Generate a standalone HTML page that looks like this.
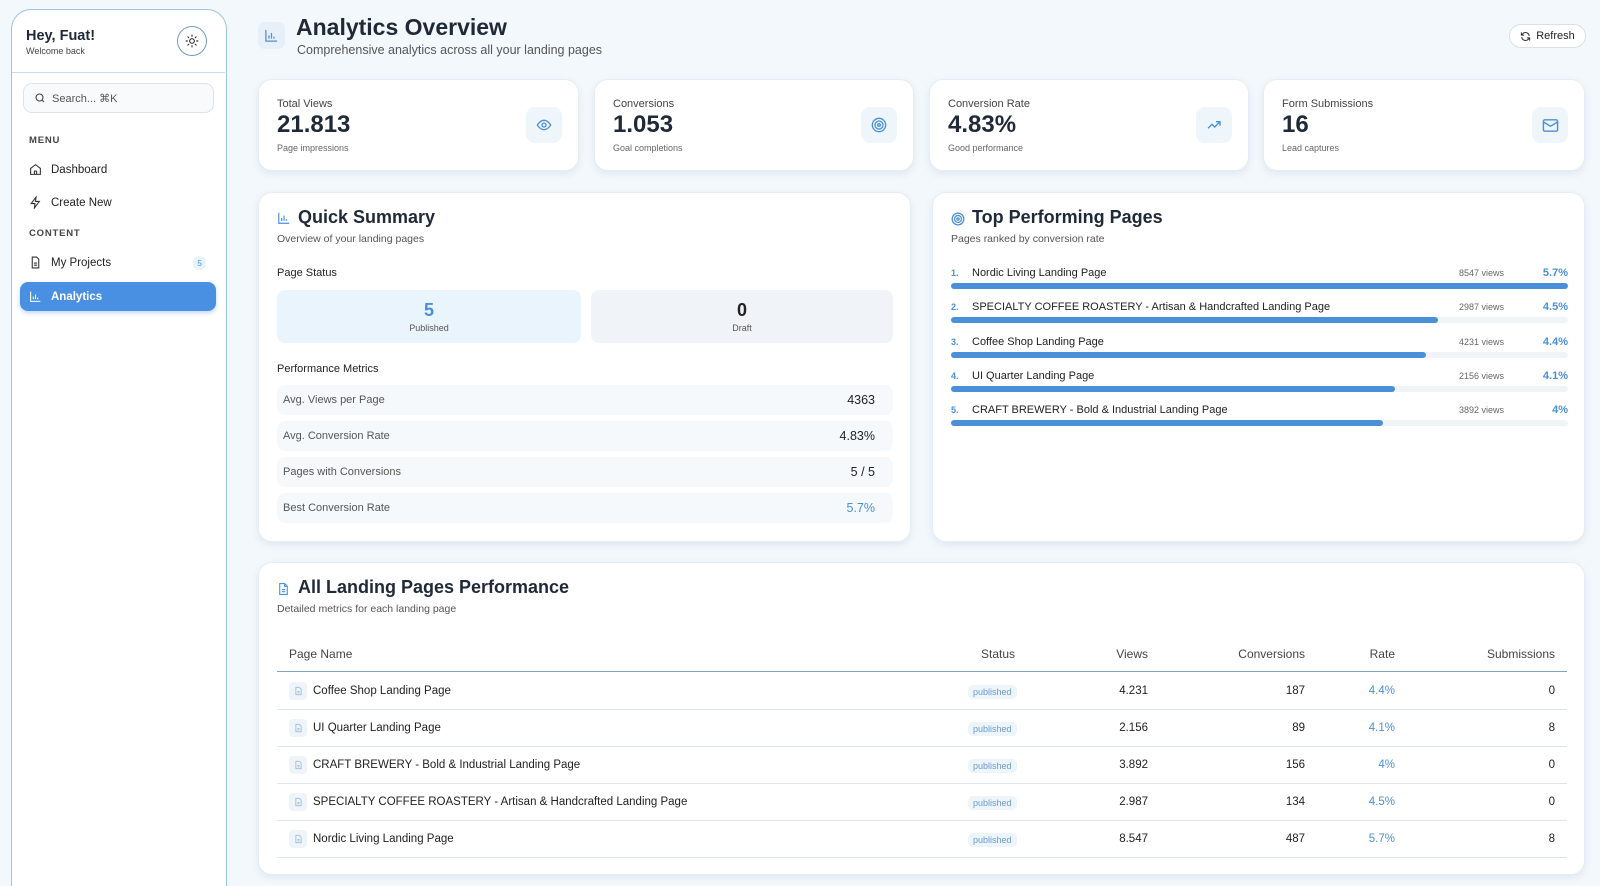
<!DOCTYPE html>
<html><head><meta charset="utf-8"><style>
*{box-sizing:border-box;margin:0;padding:0}
html,body{width:1600px;height:886px;overflow:hidden}
body{background:#f3f8fc;font-family:"Liberation Sans",Arial,sans-serif;color:#1f2937;position:relative}
.a{position:absolute}
.card{position:absolute;background:#fff;border:1px solid #e6edf4;border-radius:14px;box-shadow:0 3px 8px rgba(60,90,130,.10)}
.sb{left:11px;top:9px;width:216px;height:877px;background:#fff;border:1.5px solid #9fc3e4;border-bottom:none;border-radius:20px 20px 0 0}
.nav{position:absolute;left:20px;width:196px;height:29px;border-radius:8px;font-size:11.5px;display:flex;align-items:center;padding-left:9px;gap:9px;color:#222}
.sec{position:absolute;left:29px;font-size:9.5px;letter-spacing:.8px;color:#444;font-weight:bold}
.lbl{font-size:11px;color:#444}
.val{font-size:24px;font-weight:bold;color:#1f2937}
.sub{font-size:9px;color:#666}
.ib{position:absolute;width:36px;height:36px;border-radius:9px;background:#eef5fb;display:flex;align-items:center;justify-content:center}
.mrow{position:absolute;left:18px;width:616px;height:30px;border-radius:8px;background:#f6f9fc;font-size:11px;color:#555;display:flex;align-items:center;justify-content:space-between;padding:0 18px 0 6px}
.mrow b{font-weight:normal;font-size:12.5px;color:#222}
.ti{position:absolute;left:18px;width:617px;font-size:11px}
.ti .n{position:absolute;left:0;top:0;color:#4a90d9;font-size:9px;font-weight:bold}
.ti .t{position:absolute;left:21px;top:-1px;color:#222}
.ti .v{position:absolute;right:64px;top:0;color:#666;font-size:9px}
.ti .p{position:absolute;right:0;top:-1px;color:#4a90d9;font-weight:bold;font-size:11px}
.ti .bar{position:absolute;left:0;top:15px;width:617px;height:6px;background:#f1f4f7;border-radius:3px}
.ti .bar i{display:block;height:6px;background:#4a90d9;border-radius:3px}
.tr{position:absolute;left:18px;width:1290px;height:37px;border-bottom:1px solid #dce6ef;font-size:11.5px;color:#222}
.tr span{position:absolute;top:12px}
.pi{position:absolute;left:12px;top:9px;width:18px;height:18px;border-radius:4px;background:#eef4fa;display:flex;align-items:center;justify-content:center}
.bd{position:absolute;top:12px;left:691px;font-size:9px;color:#6a9ccc;background:#edf4fa;border-radius:5px;padding:2px 5px}
.r{text-align:right}
</style></head><body>

<div class="a sb">
  <div class="a" style="left:14px;top:18px;font-size:14.5px;font-weight:bold">Hey, Fuat!</div>
  <div class="a" style="left:14px;top:36px;font-size:9px;color:#444">Welcome back</div>
  <div class="a" style="left:165px;top:16px;width:30px;height:30px;border-radius:50%;border:1.5px solid #6f9cc4;display:flex;align-items:center;justify-content:center">
    <svg width="14" height="14" viewBox="0 0 24 24" fill="none" stroke="#333" stroke-width="2" stroke-linecap="round"><circle cx="12" cy="12" r="4"/><path d="M12 2v2M12 20v2M4.9 4.9l1.4 1.4M17.7 17.7l1.4 1.4M2 12h2M20 12h2M4.9 19.1l1.4-1.4M17.7 6.3l1.4-1.4"/></svg>
  </div>
  <div class="a" style="left:0;top:62px;width:213px;height:1px;background:#c9dcee"></div>
  <div class="a" style="left:11px;top:73px;width:191px;height:30px;border:1px solid #dde3ea;border-radius:9px;background:#f9fafb;font-size:11px;color:#555;display:flex;align-items:center;padding-left:10px;gap:6px">
    <svg width="12" height="12" viewBox="0 0 24 24" fill="none" stroke="#444" stroke-width="2.2"><circle cx="11" cy="11" r="7"/><path d="M20 20l-4-4"/></svg>Search... ⌘K
  </div>
</div>
<div class="sec" style="top:135px">MENU</div>
<div class="nav" style="top:155px"><svg width="13" height="13" viewBox="0 0 24 24" fill="none" stroke="#333" stroke-width="2"><path d="M3 10l9-7 9 7v11H3z"/><path d="M10 21v-6h4v6"/></svg>Dashboard</div>
<div class="nav" style="top:188px"><svg width="13" height="13" viewBox="0 0 24 24" fill="none" stroke="#333" stroke-width="2"><path d="M13 2L4 14h7l-1 8 9-12h-7z"/></svg>Create New</div>
<div class="sec" style="top:228px">CONTENT</div>
<div class="nav" style="top:248px"><svg width="13" height="13" viewBox="0 0 24 24" fill="none" stroke="#333" stroke-width="2"><path d="M14 2H6v20h12V6z"/><path d="M9 13h6M9 17h6"/></svg>My Projects<span style="position:absolute;right:10px;font-size:8.5px;color:#4a90d9;background:#eaf3fb;border-radius:6px;padding:2px 4px">5</span></div>
<div class="nav" style="top:282px;background:#4a90e2;color:#fff;font-weight:bold;box-shadow:0 2px 5px rgba(74,144,226,.35)"><svg width="13" height="13" viewBox="0 0 24 24" fill="none" stroke="#fff" stroke-width="2"><path d="M3 3v18h18M8 17v-5M12 17V8M16 17v-3"/></svg>Analytics</div>

<div class="ib" style="left:258px;top:22px;width:27px;height:27px;border-radius:7px;background:#e7f0f8"><svg width="15" height="15" viewBox="0 0 24 24" fill="none" stroke="#4a90d9" stroke-width="2"><path d="M3 3v18h18M8 17v-5M12 17V8M16 17v-3"/></svg></div>
<div class="a" style="left:296px;top:14px;font-size:23px;font-weight:bold;color:#1f2937">Analytics Overview</div>
<div class="a" style="left:297px;top:43px;font-size:12.5px;color:#555">Comprehensive analytics across all your landing pages</div>
<div class="a" style="left:1509px;top:24px;width:77px;height:24px;border:1px solid #d9e1e8;border-radius:12px;background:#fff;font-size:11px;color:#222;display:flex;align-items:center;justify-content:center;gap:5px"><svg width="11" height="11" viewBox="0 0 24 24" fill="none" stroke="#333" stroke-width="2.2"><path d="M20 11a8 8 0 0 0-14-5L3 9M3 3v6h6M4 13a8 8 0 0 0 14 5l3-3M21 21v-6h-6"/></svg>Refresh</div>

<div class="card" style="left:258px;top:79px;width:321px;height:92px">
 <div class="a lbl" style="left:18px;top:18px">Total Views</div><div class="a val" style="left:18px;top:31px">21.813</div><div class="a sub" style="left:18px;top:63px">Page impressions</div>
 <div class="ib" style="left:267px;top:27px"><svg width="16" height="16" viewBox="0 0 24 24" fill="none" stroke="#4a90d9" stroke-width="2"><path d="M2 12s4-7 10-7 10 7 10 7-4 7-10 7S2 12 2 12z"/><circle cx="12" cy="12" r="3"/></svg></div>
</div>
<div class="card" style="left:594px;top:79px;width:320px;height:92px">
 <div class="a lbl" style="left:18px;top:18px">Conversions</div><div class="a val" style="left:18px;top:31px">1.053</div><div class="a sub" style="left:18px;top:63px">Goal completions</div>
 <div class="ib" style="left:266px;top:27px"><svg width="16" height="16" viewBox="0 0 24 24" fill="none" stroke="#4a90d9" stroke-width="2"><circle cx="12" cy="12" r="10"/><circle cx="12" cy="12" r="6"/><circle cx="12" cy="12" r="2"/></svg></div>
</div>
<div class="card" style="left:929px;top:79px;width:320px;height:92px">
 <div class="a lbl" style="left:18px;top:18px">Conversion Rate</div><div class="a val" style="left:18px;top:31px">4.83%</div><div class="a sub" style="left:18px;top:63px">Good performance</div>
 <div class="ib" style="left:266px;top:27px"><svg width="16" height="16" viewBox="0 0 24 24" fill="none" stroke="#4a90d9" stroke-width="2"><path d="M3 17l6-6 4 4 8-8M15 7h6v6"/></svg></div>
</div>
<div class="card" style="left:1263px;top:79px;width:322px;height:92px">
 <div class="a lbl" style="left:18px;top:18px">Form Submissions</div><div class="a val" style="left:18px;top:31px">16</div><div class="a sub" style="left:18px;top:63px">Lead captures</div>
 <div class="ib" style="left:268px;top:27px"><svg width="17" height="17" viewBox="0 0 24 24" fill="none" stroke="#4a90d9" stroke-width="2"><rect x="2" y="4" width="20" height="16" rx="2"/><path d="M2 7l10 6 10-6"/></svg></div>
</div>

<div class="card" style="left:258px;top:192px;width:653px;height:350px">
 <svg class="a" style="left:18px;top:18px" width="14" height="14" viewBox="0 0 24 24" fill="none" stroke="#4a90d9" stroke-width="2"><path d="M3 3v18h18M8 17v-5M12 17V8M16 17v-3"/></svg>
 <div class="a" style="left:39px;top:14px;font-size:18px;font-weight:bold">Quick Summary</div>
 <div class="a" style="left:18px;top:40px;font-size:10.5px;color:#555">Overview of your landing pages</div>
 <div class="a" style="left:18px;top:74px;font-size:11px;color:#222">Page Status</div>
 <div class="a" style="left:18px;top:97px;width:304px;height:53px;border-radius:8px;background:#eaf4fd;text-align:center"><div style="font-size:18px;font-weight:bold;color:#4a90d9;margin-top:10px">5</div><div style="font-size:9px;color:#555;margin-top:2px">Published</div></div>
 <div class="a" style="left:332px;top:97px;width:302px;height:53px;border-radius:8px;background:#f0f4f8;text-align:center"><div style="font-size:18px;font-weight:bold;color:#222;margin-top:10px">0</div><div style="font-size:9px;color:#555;margin-top:2px">Draft</div></div>
 <div class="a" style="left:18px;top:170px;font-size:11px;color:#222">Performance Metrics</div>
 <div class="mrow" style="top:192px">Avg. Views per Page<b>4363</b></div>
 <div class="mrow" style="top:228px">Avg. Conversion Rate<b>4.83%</b></div>
 <div class="mrow" style="top:264px">Pages with Conversions<b>5 / 5</b></div>
 <div class="mrow" style="top:300px">Best Conversion Rate<b style="color:#4a90d9">5.7%</b></div>
</div>

<div class="card" style="left:932px;top:192px;width:653px;height:350px">
 <svg class="a" style="left:18px;top:19px" width="14" height="14" viewBox="0 0 24 24" fill="none" stroke="#4a90d9" stroke-width="2.2"><circle cx="12" cy="12" r="10"/><circle cx="12" cy="12" r="6"/><circle cx="12" cy="12" r="2"/></svg>
 <div class="a" style="left:39px;top:14px;font-size:18px;font-weight:bold">Top Performing Pages</div>
 <div class="a" style="left:18px;top:40px;font-size:10.5px;color:#555">Pages ranked by conversion rate</div>
 <div class="ti" style="top:75px"><span class="n">1.</span><span class="t">Nordic Living Landing Page</span><span class="v">8547 views</span><span class="p">5.7%</span><div class="bar"><i style="width:100%"></i></div></div>
 <div class="ti" style="top:109px"><span class="n">2.</span><span class="t">SPECIALTY COFFEE ROASTERY - Artisan &amp; Handcrafted Landing Page</span><span class="v">2987 views</span><span class="p">4.5%</span><div class="bar"><i style="width:79%"></i></div></div>
 <div class="ti" style="top:144px"><span class="n">3.</span><span class="t">Coffee Shop Landing Page</span><span class="v">4231 views</span><span class="p">4.4%</span><div class="bar"><i style="width:77%"></i></div></div>
 <div class="ti" style="top:178px"><span class="n">4.</span><span class="t">UI Quarter Landing Page</span><span class="v">2156 views</span><span class="p">4.1%</span><div class="bar"><i style="width:72%"></i></div></div>
 <div class="ti" style="top:212px"><span class="n">5.</span><span class="t">CRAFT BREWERY - Bold &amp; Industrial Landing Page</span><span class="v">3892 views</span><span class="p">4%</span><div class="bar"><i style="width:70%"></i></div></div>
</div>

<div class="card" style="left:258px;top:562px;width:1327px;height:313px">
 <svg class="a" style="left:18px;top:19px" width="13" height="14" viewBox="0 0 24 24" fill="none" stroke="#4a90d9" stroke-width="2"><path d="M14 2H5v20h14V7z"/><path d="M14 2v5h5M9 13h6M9 17h6"/></svg>
 <div class="a" style="left:39px;top:14px;font-size:18px;font-weight:bold">All Landing Pages Performance</div>
 <div class="a" style="left:18px;top:40px;font-size:10.5px;color:#555">Detailed metrics for each landing page</div>
 <div class="a" style="left:18px;top:72px;width:1290px;height:37px;border-bottom:1.5px solid #7fa3c0;font-size:12px;color:#444">
  <span class="a" style="left:12px;top:12px">Page Name</span>
  <span class="a" style="left:704px;top:12px">Status</span>
  <span class="a r" style="right:419px;top:12px">Views</span>
  <span class="a r" style="right:262px;top:12px">Conversions</span>
  <span class="a r" style="right:172px;top:12px">Rate</span>
  <span class="a r" style="right:12px;top:12px">Submissions</span>
 </div>
 <div class="tr" style="top:110px"><div class="pi"><svg width="9" height="10" viewBox="0 0 24 24" fill="none" stroke="#8fb3d6" stroke-width="2"><path d="M14 2H5v20h14V7z"/><path d="M9 13h6M9 17h6"/></svg></div><span style="left:36px">Coffee Shop Landing Page</span><div class="bd">published</div><span style="right:419px">4.231</span><span style="right:262px">187</span><span style="right:172px;color:#4a90d9">4.4%</span><span style="right:12px">0</span></div>
 <div class="tr" style="top:147px"><div class="pi"><svg width="9" height="10" viewBox="0 0 24 24" fill="none" stroke="#8fb3d6" stroke-width="2"><path d="M14 2H5v20h14V7z"/><path d="M9 13h6M9 17h6"/></svg></div><span style="left:36px">UI Quarter Landing Page</span><div class="bd">published</div><span style="right:419px">2.156</span><span style="right:262px">89</span><span style="right:172px;color:#4a90d9">4.1%</span><span style="right:12px">8</span></div>
 <div class="tr" style="top:184px"><div class="pi"><svg width="9" height="10" viewBox="0 0 24 24" fill="none" stroke="#8fb3d6" stroke-width="2"><path d="M14 2H5v20h14V7z"/><path d="M9 13h6M9 17h6"/></svg></div><span style="left:36px">CRAFT BREWERY - Bold &amp; Industrial Landing Page</span><div class="bd">published</div><span style="right:419px">3.892</span><span style="right:262px">156</span><span style="right:172px;color:#4a90d9">4%</span><span style="right:12px">0</span></div>
 <div class="tr" style="top:221px"><div class="pi"><svg width="9" height="10" viewBox="0 0 24 24" fill="none" stroke="#8fb3d6" stroke-width="2"><path d="M14 2H5v20h14V7z"/><path d="M9 13h6M9 17h6"/></svg></div><span style="left:36px">SPECIALTY COFFEE ROASTERY - Artisan &amp; Handcrafted Landing Page</span><div class="bd">published</div><span style="right:419px">2.987</span><span style="right:262px">134</span><span style="right:172px;color:#4a90d9">4.5%</span><span style="right:12px">0</span></div>
 <div class="tr" style="top:258px"><div class="pi"><svg width="9" height="10" viewBox="0 0 24 24" fill="none" stroke="#8fb3d6" stroke-width="2"><path d="M14 2H5v20h14V7z"/><path d="M9 13h6M9 17h6"/></svg></div><span style="left:36px">Nordic Living Landing Page</span><div class="bd">published</div><span style="right:419px">8.547</span><span style="right:262px">487</span><span style="right:172px;color:#4a90d9">5.7%</span><span style="right:12px">8</span></div>
</div>
</body></html>
